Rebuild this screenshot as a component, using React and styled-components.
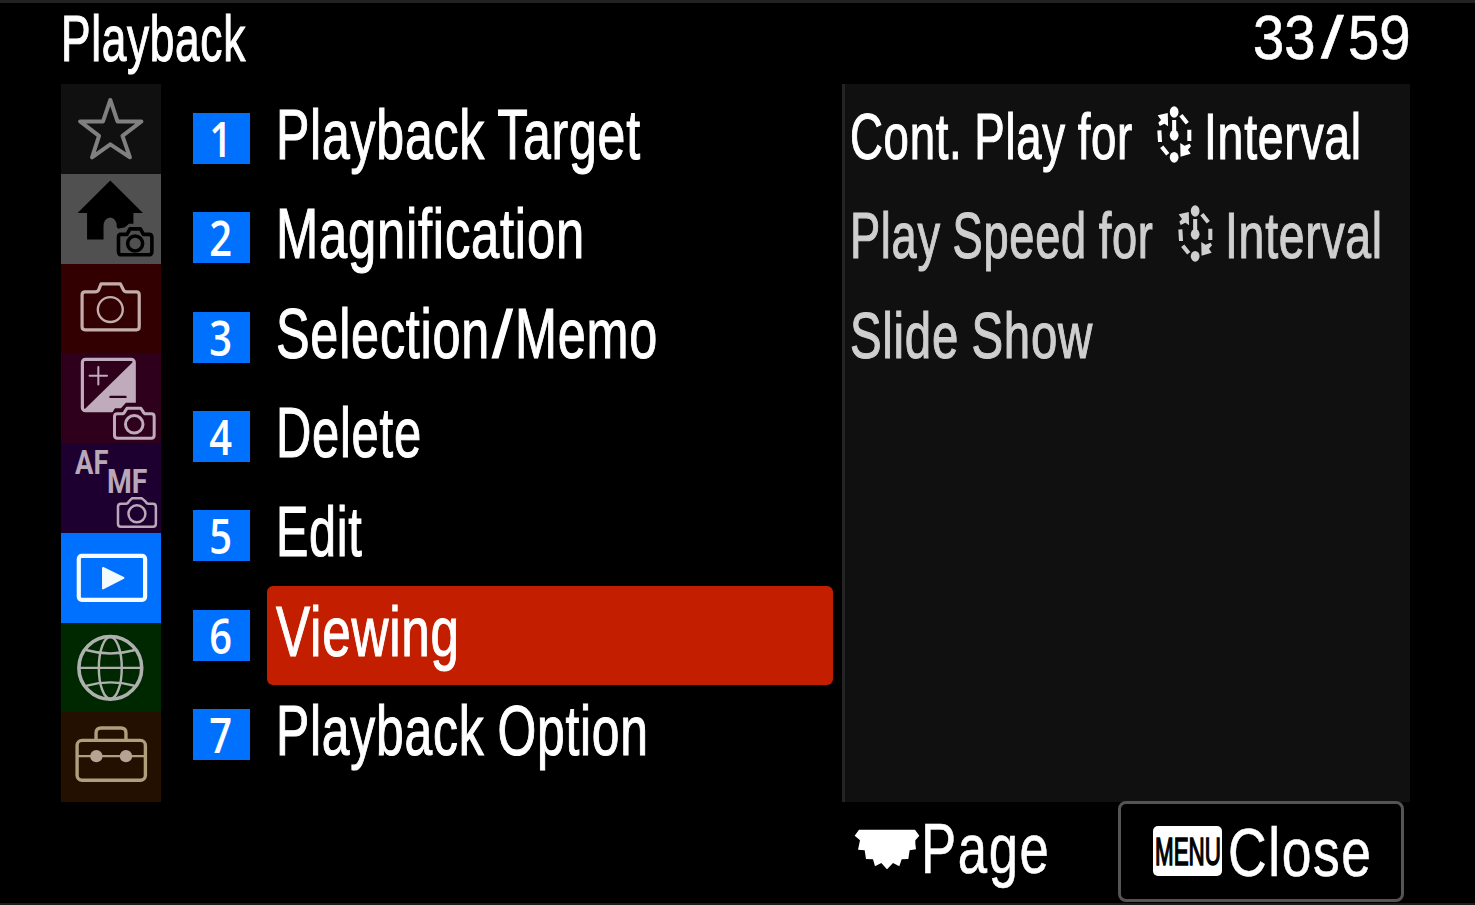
import React, { useLayoutEffect, useRef, useState } from "react";
import styled, { createGlobalStyle } from "styled-components";

const GlobalStyle = createGlobalStyle`
  * { box-sizing: border-box; }
  body { margin: 0; background: #000; overflow: hidden; }
`;

const Screen = styled.div`
  width: 1475px;
  height: 905px;
  background: #000;
  border-top: 3px solid #222;
  border-bottom: 2px solid #1c1c1c;
  color: #fff;
  font-family: "Liberation Sans", Arial, sans-serif;
  overflow: hidden;
`;

const Header = styled.header`
  display: flex;
  justify-content: space-between;
  height: 81px;
  padding: 0 64px 0 61px;
`;

const Main = styled.main`
  display: flex;
  height: 718px;
  padding-left: 61px;
`;

const Sidebar = styled.nav`
  width: 100px;
  height: 718px;
  display: grid;
  grid-template-rows: repeat(8, minmax(0, 1fr));
`;

const Tab = styled.div`
  background: ${(p) => p.$bg};
  color: ${(p) => p.$fg};
  svg { display: block; width: 100px; height: 100%; }
`;

const Menu = styled.ul`
  list-style: none;
  margin: 5px 0 0 32px;
  padding: 0;
  width: 640px;
`;

const MenuRow = styled.li`
  display: flex;
  align-items: center;
  height: 99.3px;
`;

const Badge = styled.span`
  width: 57px;
  height: 51px;
  margin-right: 17px;
  background: #0070ff;
  display: flex;
  justify-content: center;
  font: 600 48px/51px "Open Sans", "Noto Sans", sans-serif;
`;

const Digit = styled.span`
  margin-right: 2px;
  transform: scaleX(0.83);
`;

const MenuLabel = styled.div`
  width: 566px;
  height: 99px;
  padding-left: 9px;
  border-radius: 6px;
  background: ${(p) => (p.$active ? "#c41e00" : "transparent")};
`;

const Panel = styled.section`
  width: 568px;
  margin-left: 9px;
  padding: 5px 0 0 5px;
  background: #101010;
  border-left: 3px solid #242424;
`;

const PanelRow = styled.div`
  display: flex;
  height: 99.3px;
  color: ${(p) => (p.$bright ? "#fff" : "#cfcfcf")};
`;

const IntervalSvg = styled.svg`
  width: 35px;
  height: 57px;
  margin: 17px 12px 0 25px;
`;

const Footer = styled.footer`
  display: flex;
  height: 101px;
  margin-top: -1px;
  padding-left: 854px;
`;

const PageHint = styled.div`
  display: flex;
  width: 264px;
`;

const WheelSvg = styled.svg`
  width: 66px;
  height: 40px;
  margin: 28px 1px 0 0;
`;

const CloseButton = styled.div`
  display: flex;
  width: 286px;
  height: 101px;
  padding-left: 32px;
  border: 3px solid #545454;
  border-radius: 8px;
  background: #000;
`;

const MenuKey = styled.span`
  width: 69px;
  height: 50px;
  margin: 22px 6px 0 0;
  padding-left: 2px;
  border-radius: 5px;
  background: #fff;
  color: #000;
`;

const FitBox = styled.span`
  display: block;
  flex: none;
  width: ${(p) => p.$width}px;
  height: ${(p) => p.$line}px;
`;

const FitInner = styled.span`
  display: inline-block;
  white-space: pre;
  font-size: ${(p) => p.$size}px;
  line-height: ${(p) => p.$line}px;
  letter-spacing: ${(p) => p.$spacing}em;
  word-spacing: -0.03em;
  -webkit-text-stroke: ${(p) => p.$stroke}px currentColor;
  transform-origin: 0 0;
`;

const Slash = styled.span`
  display: inline-block;
  margin: 0 ${(p) => p.$gap}em;
  transform: scale(1.45, 0.95);
`;

// Condenses a line of text horizontally so that it spans exactly `width` pixels.
function Fit({ children, width, size = 64.5, line = 97, spacing = 0.015, stroke = 1.1 }) {
  const ref = useRef(null);
  const [scale, setScale] = useState(1);
  useLayoutEffect(() => {
    setScale(width / (ref.current.offsetWidth - spacing * size));
  }, [width, size, spacing, children]);
  return (
    <FitBox $width={width} $line={line}>
      <FitInner
        ref={ref}
        $size={size}
        $line={line}
        $spacing={spacing}
        $stroke={stroke}
        style={{ transform: `scaleX(${scale})` }}
      >
        {children}
      </FitInner>
    </FitBox>
  );
}

const TabText = styled.text`
  font: 700 ${(p) => p.$size}px Roboto, sans-serif;
`;

const line = { fill: "none", stroke: "currentColor", strokeLinejoin: "round", strokeLinecap: "round" };

const StarIcon = () => (
  <svg viewBox="0 0 100 90" {...line} strokeWidth="4">
    <path d="M49.3 16 L56.5 37.5 H80.5 L61.5 52 L69 73.5 L49.3 60.5 L31 73.5 L38 52 L19 37.5 H42 Z" />
  </svg>
);

const HomeIcon = () => (
  <svg viewBox="0 0 100 90" {...line}>
    <path
      fill="currentColor"
      stroke="none"
      d="M49.3 6.5 L82 39 H72.5 V50 H68 L64 53.5 L57 55 L55.7 53 V50 Q54 44 49 43.5 Q42.5 45 42.5 52 V65.7 H26 V39 H16.500 Z"
    />
    <g strokeWidth="3.600">
      <path d="M60 60.5 H66 L69 55 H79.5 L82.5 60.5 H88 Q91 60.5 91 63.5 V78 Q91 81 88 81 H60.500 Q57.500 81 57.500 78 V63.500 Q57.500 60.500 60 60.500 Z" />
      <circle cx="74.200" cy="69.700" r="7.500" />
    </g>
  </svg>
);

const CameraIcon = () => (
  <svg viewBox="0 0 100 90" {...line} strokeWidth="3.200">
    <path d="M24 28 H34 Q37 28 38 25 L40 20 H59.500 L62 25 Q63 28 66 28 H75.500 Q78.300 28 78.300 31 V63 Q78.300 66 75.500 66 H24 Q21 66 21 63 V31 Q21 28 24 28 Z" />
    <circle cx="49.300" cy="45.700" r="12.500" strokeWidth="2.400" />
  </svg>
);

const ExposureIcon = () => (
  <svg viewBox="0 0 100 90" {...line}>
    <rect x="21.300" y="6.300" width="52" height="51.500" rx="3" strokeWidth="3.200" />
    <path d="M73 8 V58 H22 Z" fill="currentColor" stroke="none" />
    <path d="M28.500 22.700 H46 M37.300 14 V31.500" strokeWidth="2" />
    <path d="M49.500 44 H64.500" stroke="#2e001c" strokeWidth="2.400" />
    <path
      d="M50 62 L54 55.500 H60 L65 50 H78 V90 H50 Z"
      fill="#2e001c"
      stroke="none"
    />
    <g strokeWidth="3">
      <path d="M56.500 61 H61 Q63 61 64 58.500 L66 55.500 H80 L82 58.500 Q83 61 85 61 H90.500 Q93.300 61 93.300 64 V82.500 Q93.300 85.500 90.500 85.500 H56.500 Q53.500 85.500 53.500 82.500 V64 Q53.500 61 56.500 61 Z" />
      <circle cx="73.300" cy="71.500" r="8.800" />
    </g>
  </svg>
);

const FocusIcon = () => (
  <svg viewBox="0 0 100 90">
    <TabText $size={33} x="14" y="31.500" fill="currentColor" textLength="33.500" lengthAdjust="spacingAndGlyphs">AF</TabText>
    <TabText $size={34} x="46" y="50.500" fill="currentColor" textLength="40.500" lengthAdjust="spacingAndGlyphs">MF</TabText>
    <g {...line} strokeWidth="2.500">
      <path d="M60 61 H65 Q67 61 68 58.500 L71 55.500 H81 L84.500 58.500 Q85.500 61 87.500 61 H92 Q95 61 95 64 V81 Q95 84 92 84 H60 Q57 84 57 81 V64 Q57 61 60 61 Z" />
      <circle cx="76" cy="71" r="8.500" />
    </g>
  </svg>
);

const PlayIcon = () => (
  <svg viewBox="0 0 100 90" {...line}>
    <rect x="17.700" y="23" width="66.500" height="44" rx="3" strokeWidth="4.200" />
    <path d="M42 35 L62.500 45 L42 55.500 Z" fill="currentColor" strokeWidth="2" />
  </svg>
);

const GlobeIcon = () => (
  <svg viewBox="0 0 100 90" {...line} strokeWidth="2.400">
    <circle cx="49.300" cy="45" r="31.500" strokeWidth="3.600" />
    <ellipse cx="49.300" cy="45" rx="11.500" ry="31" />
    <path d="M18 45 H81 M26 27.300 Q49.300 33.800 73 27.300 M26 62.800 Q49.300 56.300 73 62.800" />
  </svg>
);

const ToolboxIcon = () => (
  <svg viewBox="0 -1 100 90" {...line} strokeWidth="3.400">
    <rect x="16" y="27.500" width="68.500" height="40" rx="5" />
    <path d="M35 27 V20 Q35 15 40 15 H60 Q65 15 65 20 V27" />
    <path d="M17 43.300 H84" strokeWidth="2.400" />
    <circle cx="35.300" cy="43.300" r="6.200" fill="#b8a294" stroke="none" />
    <circle cx="65" cy="43.300" r="6.200" fill="#b8a294" stroke="none" />
  </svg>
);

const IntervalIcon = () => (
  <IntervalSvg viewBox="0 0 104 171" preserveAspectRatio="none" fill="currentColor">
    <ellipse cx="51" cy="18" rx="13" ry="17" />
    <ellipse cx="51" cy="154" rx="13" ry="16" />
    <ellipse cx="51" cy="88" rx="13" ry="16" />
    <path d="M2 28 L32 21 L33 61 L22 53 L8 60 L4 50 L12 42 Z" />
    <path d="M69 111 L82 119 L97 113 L101 121 L92 131 L100 143 L70 152 Z" />
    <path
      d="M51 42 V84 M7 73 L9 108 M14 122 L32 145 M71 28 L90 52 M96 71 V105"
      fill="none"
      stroke="currentColor"
      strokeWidth="12"
    />
  </IntervalSvg>
);

const WheelIcon = () => (
  <WheelSvg viewBox="0 0 198 120" fill="#fff">
    <path d="M15 2 H183 L196 20 L184 34 L184 44 L186 61 L167 64 L163 90 L143 91 L136 112 L117 102 L99 121 L82 102 L63 112 L57 91 L36 90 L32 64 L12 62 L18 34 L2 20 Z" />
  </WheelSvg>
);

const tabs = [
  { bg: "#101010", fg: "#808080", Icon: StarIcon },
  { bg: "#505050", fg: "#000", Icon: HomeIcon },
  { bg: "#320000", fg: "#c2adaa", Icon: CameraIcon },
  { bg: "#2e001c", fg: "#bfabbc", Icon: ExposureIcon },
  { bg: "#1e0030", fg: "#b9a8b8", Icon: FocusIcon },
  { bg: "#0070ff", fg: "#f4fbff", Icon: PlayIcon },
  { bg: "#002800", fg: "#aeb0ae", Icon: GlobeIcon },
  { bg: "#241000", fg: "#aea07c", Icon: ToolboxIcon },
];

const items = [
  { label: "Playback Target", width: 364 },
  { label: "Magnification", width: 308 },
  { label: <>Selection<Slash $gap={0.1}>/</Slash>Memo</>, width: 381 },
  { label: "Delete", width: 145 },
  { label: "Edit", width: 86 },
  { label: "Viewing", width: 183, active: true },
  { label: "Playback Option", width: 372 },
];

export default function App() {
  return (
    <>
      <GlobalStyle />
      <Screen>
        <Header>
          <Fit width={184} line={72}>Playback</Fit>
          <Fit width={158} line={69} size={63} spacing={0} stroke={0.6}>
            33<Slash $gap={0.15}>/</Slash>59
          </Fit>
        </Header>
        <Main>
          <Sidebar>
            {tabs.map(({ bg, fg, Icon }) => (
              <Tab key={bg} $bg={bg} $fg={fg}><Icon /></Tab>
            ))}
          </Sidebar>
          <Menu>
            {items.map((item, i) => (
              <MenuRow key={i}>
                <Badge><Digit>{i + 1}</Digit></Badge>
                <MenuLabel $active={item.active}>
                  <Fit width={item.width} size={70.5} line={91}>{item.label}</Fit>
                </MenuLabel>
              </MenuRow>
            ))}
          </Menu>
          <Panel>
            <PanelRow $bright>
              <Fit width={282}>Cont. Play for</Fit>
              <IntervalIcon />
              <Fit width={157}>Interval</Fit>
            </PanelRow>
            <PanelRow>
              <Fit width={303}>Play Speed for</Fit>
              <IntervalIcon />
              <Fit width={157}>Interval</Fit>
            </PanelRow>
            <PanelRow>
              <Fit width={242}>Slide Show</Fit>
            </PanelRow>
          </Panel>
        </Main>
        <Footer>
          <PageHint>
            <WheelIcon />
            <Fit width={128} size={70} line={96} stroke={0.6} spacing={0.03}>Page</Fit>
          </PageHint>
          <CloseButton>
            <MenuKey>
              <Fit width={66} size={39} line={51} spacing={0} stroke={1.6}>MENU</Fit>
            </MenuKey>
            <Fit width={143} size={68} line={96} stroke={0.6} spacing={0.03}>Close</Fit>
          </CloseButton>
        </Footer>
      </Screen>
    </>
  );
}
